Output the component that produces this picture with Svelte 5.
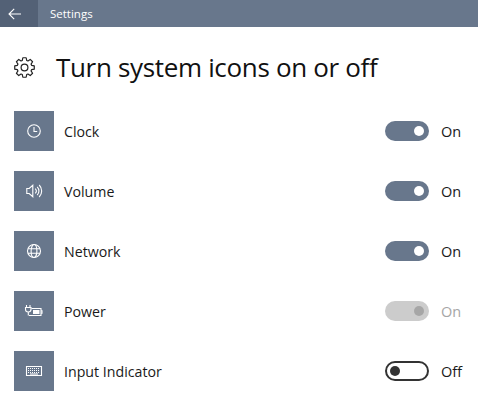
<script>
	const rows = [
		{ name: "Clock", icon: "clock", state: "On" },
		{ name: "Volume", icon: "volume", state: "On" },
		{ name: "Network", icon: "network", state: "On" },
		{ name: "Power", icon: "power", state: "On", disabled: true },
		{ name: "Input Indicator", icon: "keyboard", state: "Off" }
	];

	// eight teeth round the settings gear
	const gearPath = Array.from({ length: 8 }, (_, i) => {
		const a = (i * Math.PI) / 4;
		const pt = (r, d) => {
			const t = a + d;
			return `${(10.5 + r * Math.sin(t)).toFixed(2)} ${(10.5 - r * Math.cos(t)).toFixed(2)}`;
		};
		return `${i ? "L" : "M"}${pt(7.4, -0.3)}L${pt(9.9, -0.17)}L${pt(9.9, 0.17)}L${pt(7.4, 0.3)}`;
	}).join("") + "Z";
</script>

<div class="window">
	<header class="titlebar">
		<button class="back" aria-label="Back">
			<svg width="13" height="12" viewBox="0 0 13 12" fill="none" stroke="#fff" stroke-width="1.1">
				<path d="M13 6H1M6.200 0.800 1 6l5.200 5.200" />
			</svg>
		</button>
		<span class="app-name">Settings</span>
	</header>

	<div class="heading">
		<svg class="gear" width="21" height="21" viewBox="0 0 21 21" fill="none" stroke="#222" stroke-width="1.2" stroke-linejoin="round">
			<path d={gearPath} />
			<circle cx="10.500" cy="10.500" r="3.400" />
		</svg>
		<h1>Turn system icons on or off</h1>
	</div>

	<ul class="rows">
		{#each rows as row}
			<li class="row">
				<span class="tile">
					<svg width="16" height="16" viewBox="0 0 16 16" fill="none" stroke="#fff" stroke-width="1.1">
						{#if row.icon === "clock"}
							<circle cx="8" cy="8" r="6.300" />
							<path d="M8 4v4.500h3.200" />
						{:else if row.icon === "volume"}
							<path d="M0.800 5.500h2.400L6.800 2.300v11.400L3.200 10.500H0.800z" />
							<path d="M9.200 5.600a3.400 3.400 0 0 1 0 4.800M11.200 3.800a6 6 0 0 1 0 8.400M13.200 2a8.500 8.500 0 0 1 0 12" />
						{:else if row.icon === "network"}
							<circle cx="8" cy="8" r="6.500" />
							<ellipse cx="8" cy="8" rx="2.900" ry="6.500" />
							<path d="M2 5.800h12M2 10.200h12" />
						{:else if row.icon === "power"}
							<path d="M0.500 2v2.500M4 2v2.500M-0.500 4.500h5.500v1.800a2.700 2.700 0 0 1-5.500 0zM2.300 9v3.500" />
							<path d="M5.500 5.500h9.500v7H3" />
							<path d="M15 7.800h1v2.400h-1" />
							<path d="M7 7h6.500v4H7z" fill="#fff" stroke="none" />
						{:else}
							<path d="M.5 3.500h15v9H.5z" />
							<path d="M2 5.500h12M2 7.500h12M2 9.500h12" stroke-dasharray="1 1" />
							<path d="M4 11h8" />
						{/if}
					</svg>
				</span>
				<span class="name">{row.name}</span>
				<span class="toggle" class:off={row.state === "Off"} class:disabled={row.disabled}>
					<span class="knob"></span>
				</span>
				<span class="state" class:muted={row.disabled}>{row.state}</span>
			</li>
		{/each}
	</ul>
</div>

<style>
	:global(body) {
		background: #fff;
	}

	.window {
		width: 478px;
		height: 402px;
		overflow: hidden;
		background: #fff;
		color: #1a1a1a;
		font-family: "Open Sans", "Noto Sans", sans-serif;
	}

	.titlebar {
		display: flex;
		align-items: center;
		height: 27px;
		background: #68778c;
		color: #fff;
	}

	.back {
		display: flex;
		align-items: center;
		justify-content: center;
		width: 38px;
		height: 27px;
		padding: 0 10px 0 0;
		border: 0;
		background: #536176;
	}

	.app-name {
		margin-left: 12px;
		font-size: 11.500px;
	}

	.heading {
		display: flex;
		align-items: center;
		gap: 21px;
		height: 40px;
		margin-top: 20px;
		padding-left: 14px;
	}

	h1 {
		margin: 0;
		font-size: 26px;
		font-weight: 400;
		letter-spacing: -0.33px;
		color: #111;
	}

	.rows {
		display: flex;
		flex-direction: column;
		gap: 20px;
		margin: 24px 0 0;
		padding: 0 0 0 14px;
		list-style: none;
	}

	.row {
		display: flex;
		align-items: center;
		height: 40px;
	}

	.tile {
		display: flex;
		align-items: center;
		justify-content: center;
		width: 40px;
		height: 40px;
		background: #68778c;
	}

	.tile svg {
		overflow: visible;
	}

	.name {
		flex: 1;
		margin-left: 10px;
		font-size: 14.200px;
	}

	.toggle {
		display: flex;
		align-items: center;
		justify-content: flex-end;
		box-sizing: border-box;
		width: 44px;
		height: 20px;
		padding: 0 5px;
		border-radius: 10px;
		background: #68778c;
	}

	.knob {
		width: 10px;
		height: 10px;
		border-radius: 50%;
		background: #fff;
	}

	.toggle.disabled {
		background: #cccccc;
	}

	.toggle.disabled .knob {
		background: #a6a6a6;
	}

	.toggle.off {
		justify-content: flex-start;
		padding: 0 3px;
		border: 2px solid #333;
		background: #fff;
	}

	.toggle.off .knob {
		background: #333;
	}

	.state {
		width: 37px;
		margin-left: 12px;
		font-size: 14.500px;
	}

	.state.muted {
		color: #a6a6a6;
	}
</style>
